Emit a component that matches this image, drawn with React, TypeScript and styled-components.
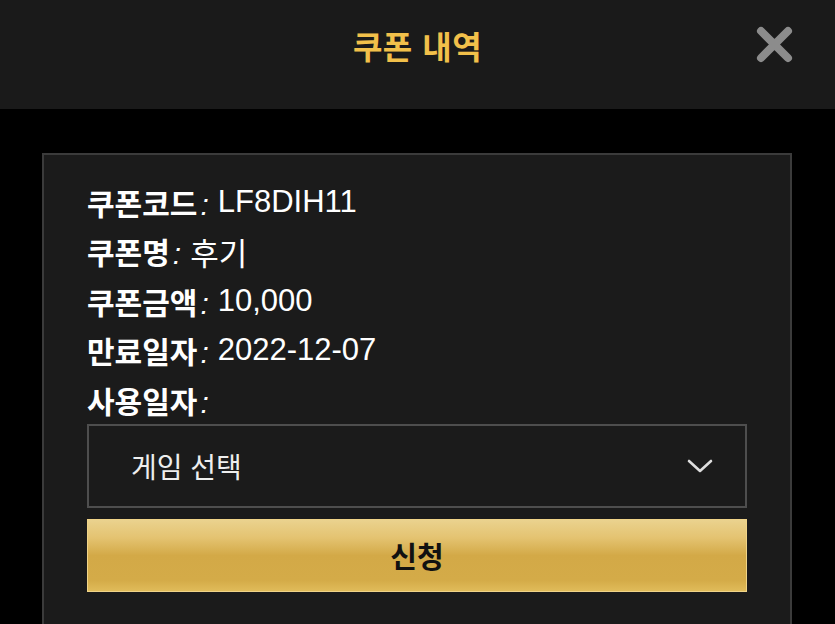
import styled, { createGlobalStyle } from 'styled-components';

const GlobalStyle = createGlobalStyle`
  html, body {
    margin: 0;
    padding: 0;
    background: #000;
  }
  body {
    font-family: "Liberation Sans", "Noto Sans CJK KR", sans-serif;
    overflow: hidden;
  }
`;

const Page = styled.div`
  width: 835px;
  height: 624px;
  background: #000;
  display: flex;
  flex-direction: column;
`;

const Header = styled.header`
  height: 109px;
  flex-shrink: 0;
  background: #1a1a1a;
  display: flex;
  align-items: center;
  justify-content: center;
  position: relative;
`;

const Title = styled.h1`
  margin: 0 0 19px;
  font-size: 32px;
  font-weight: 700;
  color: #f2c04a;
  letter-spacing: 0.5px;
`;

const CloseButton = styled.button`
  position: absolute;
  right: 41px;
  top: 25px;
  width: 39px;
  height: 39px;
  padding: 0;
  border: none;
  background: none;
  cursor: pointer;
`;

const Body = styled.main`
  flex: 1;
  padding: 44px 43px 0 42px;
  display: flex;
`;

const Card = styled.section`
  flex: 1;
  background: #1b1b1b;
  border: 2px solid #3b3b3b;
  border-bottom: none;
  padding: 22px 43px 0 43px;
  display: flex;
  flex-direction: column;
`;

const InfoList = styled.dl`
  margin: 0;
  display: flex;
  flex-direction: column;
`;

const InfoRow = styled.div`
  height: 49.5px;
  display: flex;
  align-items: center;
  font-size: 30px;
  color: #fff;
`;

const Label = styled.dt`
  font-weight: 700;
`;

const Colon = styled.span`
  font-style: italic;
  font-weight: 400;
  margin: 0 9px 0 3px;
`;

const Value = styled.dd`
  margin: 0;
  font-size: 31px;
  font-weight: 400;
`;

const Select = styled.div`
  margin-top: -1px;
  height: 80px;
  border: 2px solid #4e4e4e;
  background: #1b1b1b;
  display: flex;
  align-items: center;
  justify-content: space-between;
  padding: 0 32px 0 42px;
  color: #eee;
  font-size: 28px;
  cursor: pointer;
`;

const SubmitButton = styled.button`
  margin-top: 11px;
  height: 73px;
  width: 100%;
  border: 1px solid #f0d489;
  background: linear-gradient(
    to bottom,
    #ead28e 0%,
    #e4c371 25%,
    #d3a947 50%,
    #d4ab48 85%,
    #e0bb5a 100%
  );
  color: #111;
  font-family: "Liberation Sans", "Noto Sans CJK KR", sans-serif;
  font-size: 29px;
  font-weight: 700;
  cursor: pointer;
`;

const rows = [
  { label: '쿠폰코드', value: 'LF8DIH11' },
  { label: '쿠폰명', value: '후기' },
  { label: '쿠폰금액', value: '10,000' },
  { label: '만료일자', value: '2022-12-07' },
  { label: '사용일자', value: '' },
];

export default function App() {
  return (
    <Page>
      <GlobalStyle />
      <Header>
        <Title>쿠폰 내역</Title>
        <CloseButton aria-label="닫기">
          <svg width="39" height="39" viewBox="0 0 39 39">
            <path
              d="M6 6 L33 33 M33 6 L6 33"
              stroke="#8c8c8c"
              strokeWidth="8"
              strokeLinecap="round"
            />
          </svg>
        </CloseButton>
      </Header>
      <Body>
        <Card>
          <InfoList>
            {rows.map((r) => (
              <InfoRow key={r.label}>
                <Label>
                  {r.label}
                  <Colon>:</Colon>
                </Label>
                <Value>{r.value}</Value>
              </InfoRow>
            ))}
          </InfoList>
          <Select>
            <span>게임 선택</span>
            <svg width="26" height="14" viewBox="0 0 26 14">
              <path
                d="M2 2 L13 12 L24 2"
                fill="none"
                stroke="#ddd"
                strokeWidth="2.6"
                strokeLinecap="round"
                strokeLinejoin="round"
              />
            </svg>
          </Select>
          <SubmitButton>신청</SubmitButton>
        </Card>
      </Body>
    </Page>
  );
}
